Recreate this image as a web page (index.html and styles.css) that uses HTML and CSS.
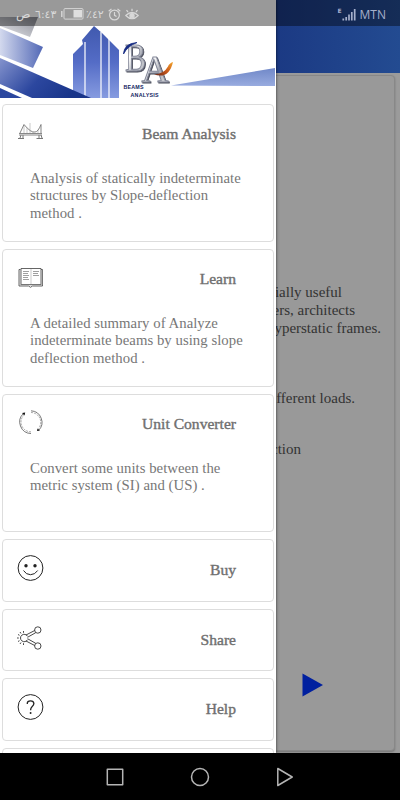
FILE: index.html
```
<!DOCTYPE html>
<html lang="en">
<head>
    <meta charset="UTF-8">
    <meta name="viewport" content="width=device-width, initial-scale=1.0">
    <title>Beams Analysis</title>
    <link rel="stylesheet" href="styles.css">
</head>
<body>
<div class="screen">
    <main class="page">
        <div class="toolbar"></div>
        <div class="page-card">
            <div class="intro">
                <p class="line useful">cially useful</p>
                <p class="line architects">ers, architects</p>
                <p class="line frames">hyperstatic frames.</p>
            </div>
            <p class="line loads">different loads.</p>
            <p class="line method">ction</p>
            <svg class="play" width="22" height="24" viewBox="0 0 22 24"><path d="M.5 .5 21 12 .5 23.5z" fill="#00209f"/></svg>
        </div>
    </main>

    <aside class="drawer">
        <svg class="hero" width="276" height="98" viewBox="0 0 276 98">
            <defs>
                <linearGradient id="stripe" x1="0" y1="0" x2="1" y2="0">
                    <stop offset="0" stop-color="#d3d9ee"/>
                    <stop offset="1" stop-color="#5268b6"/>
                </linearGradient>
                <linearGradient id="stripeTop" x1="0" y1="1" x2="1" y2="0">
                    <stop offset="0" stop-color="#e4e5ea"/>
                    <stop offset="1" stop-color="#8b8d96"/>
                </linearGradient>
                <linearGradient id="stripeDark" x1="0" y1="0" x2="1" y2=".4">
                    <stop offset="0" stop-color="#8493cd"/>
                    <stop offset=".55" stop-color="#2c479f"/>
                    <stop offset="1" stop-color="#183489"/>
                </linearGradient>
                <linearGradient id="tower" x1="0" y1="0" x2="0" y2="1">
                    <stop offset="0" stop-color="#4059ae"/>
                    <stop offset=".5" stop-color="#546cc6"/>
                    <stop offset="1" stop-color="#869be0"/>
                </linearGradient>
                <linearGradient id="wedge" x1="0" y1="0" x2="0" y2="1">
                    <stop offset="0" stop-color="#7088c8"/>
                    <stop offset="1" stop-color="#98abdf"/>
                </linearGradient>
                <linearGradient id="metal" x1="0" y1="0" x2="1" y2="1">
                    <stop offset="0" stop-color="#737783"/>
                    <stop offset=".35" stop-color="#ffffff"/>
                    <stop offset=".6" stop-color="#a9acb5"/>
                    <stop offset="1" stop-color="#eeeeee"/>
                </linearGradient>
                <linearGradient id="flame" x1="0" y1="1" x2="1" y2="0">
                    <stop offset="0" stop-color="#642419"/>
                    <stop offset=".5" stop-color="#c9591c"/>
                    <stop offset="1" stop-color="#f3a52c"/>
                </linearGradient>
            </defs>
            <rect width="276" height="98" fill="#fff"/>
            <path d="M0 17 38 17 30 37 0 26z" fill="url(#stripeTop)"/>
            <path d="M0 28 43 47 33 68 0 55z" fill="url(#stripe)"/>
            <path d="M73 54 83 44 82 40 94 26 102 33 119 50V98H73z" fill="url(#tower)"/>
            <path d="M85 42V98M101 32V98M109 39V98" stroke="#fff" stroke-width="1.200"/>
            <path d="M0 58 91 98H32L0 84z" fill="url(#stripeDark)"/>
            <path d="M0 88 22 98H0z" fill="#2b479f"/>
            <path d="M171 85.500 275 68V86z" fill="url(#wedge)"/>
            <text x="125" y="71" class="letter" fill="url(#metal)" textLength="21" lengthAdjust="spacingAndGlyphs">B</text>
            <text x="141.500" y="81.500" class="letter letter-a" fill="url(#metal)" textLength="27" lengthAdjust="spacingAndGlyphs">A</text>
            <path d="M123.500 54Q124 43.500 137 42.500Q127.500 46 123.500 54z" fill="#172c83" stroke="#172c83" stroke-width=".8"/>
            <path d="M154 74.500Q169 79.500 173 62Q169 63.500 168 66.500Q164 74 154 74.500z" fill="url(#flame)"/>
            <text x="123.500" y="89" class="tagline" textLength="20">BEAMS</text>
            <text x="130.500" y="96.500" class="tagline" textLength="28">ANALYSIS</text>
        </svg>

        <div class="menu">
            <section class="card tall">
                <div class="card-head">
                    <svg class="icon" width="28" height="28" viewBox="0 0 28 28" fill="none" stroke="#777">
                        <path d="M3 15.500H26M3 17H26" stroke="#888"/>
                        <path d="M4 15 8 6.500Q15 15 19 14Q22 14 25 6.500V15" stroke-width=".9"/>
                        <path d="M8 7V15M11 10V15M14 5V15M17 14V15M22 12V15" stroke-width=".4"/>
                        <path d="M5 17 4 20M7 17V20M23 17V20M25 17 26 20M2 20.500H8M20.500 20.500H27" stroke-width="1"/>
                    </svg>
                    <h2>Beam Analysis</h2>
                </div>
                <p>Analysis of statically indeterminate structures by Slope-deflection method .</p>
            </section>

            <section class="card tall">
                <div class="card-head">
                    <svg class="icon" width="28" height="28" viewBox="0 0 28 28" fill="none" stroke="#555">
                        <path d="M5 5.500H25V21.500H5z" stroke-width=".9"/>
                        <path d="M4.500 6.500H3V23H12.500Q14.500 25.500 16.500 23H26.500V6.500H25" stroke-width=".9"/>
                        <path d="M4 7V22H26V7" stroke="#999" stroke-width=".7"/>
                        <path d="M15 6V21" stroke="#aaa" stroke-width=".6"/>
                        <path d="M7 8.500H13M7 10.500H12M7 12.500H13M7 14.500H12M7 16.500H13M17 8.500H23M17 10.500H22M17 12.500H23" stroke="#888" stroke-width=".8"/>
                    </svg>
                    <h2>Learn</h2>
                </div>
                <p>A detailed summary of Analyze indeterminate beams by using slope deflection method .</p>
            </section>

            <section class="card tall">
                <div class="card-head">
                    <svg class="icon" width="28" height="28" viewBox="0 0 28 28" fill="none" stroke="#555">
                        <path d="M15 2.800A11.500 11.500 0 0 1 22.500 22.500" stroke-width=".8"/>
                        <path d="M15 4.500A9.800 9.800 0 0 1 22.500 20.500" stroke-width=".5" stroke-dasharray="2 1"/>
                        <path d="M15 25.500A11.500 11.500 0 0 1 7.500 5.500" stroke-width=".8"/>
                        <path d="M15 23.800A9.800 9.800 0 0 1 7.500 7.500" stroke-width=".5" stroke-dasharray="2 1"/>
                        <path d="M6 5 9.200 4.500 8.500 7.500zM21 23 21.500 20.500 24 22.500z" fill="#111" stroke="none"/>
                    </svg>
                    <h2>Unit Converter</h2>
                </div>
                <p>Convert some units between the metric system (SI) and (US) .</p>
            </section>

            <section class="card">
                <div class="card-head">
                    <svg class="icon" width="28" height="28" viewBox="0 0 28 28" fill="none" stroke="#222">
                        <circle cx="14.500" cy="14" r="12.400"/>
                        <circle cx="10" cy="11.800" r="1.700" fill="#222" stroke="none"/>
                        <circle cx="19" cy="11.800" r="1.700" fill="#222" stroke="none"/>
                        <path d="M7.500 16.500Q10 20.700 14.500 20.700T21.700 16.500"/>
                    </svg>
                    <h2>Buy</h2>
                </div>
            </section>

            <section class="card">
                <div class="card-head">
                    <svg class="icon" width="28" height="28" viewBox="0 0 28 28" fill="none" stroke="#333" stroke-width=".9">
                        <circle cx="21.800" cy="6" r="3.200"/>
                        <circle cx="21.800" cy="22" r="3.200"/>
                        <path d="M11.500 12.300A3.700 3.700 0 1 0 11.500 15.700"/>
                        <path d="M10 11 18.700 6.500M11.500 13.300 19.700 8.700M11.500 14.700 19.700 19.300M10 17 18.700 21.500"/>
                        <path d="M1 14H2.800M2 10.500 3.500 11.300M4 8 5 9.500M7.500 7V8.800M2 17.500 3.500 16.700M4 20 5 18.500M7.500 21V19.200"/>
                    </svg>
                    <h2>Share</h2>
                </div>
            </section>

            <section class="card">
                <div class="card-head">
                    <svg class="icon" width="28" height="28" viewBox="0 0 28 28" fill="none" stroke="#222">
                        <circle cx="14.500" cy="14" r="12.400"/>
                        <path d="M11.300 11V10.300Q11.300 7.800 14.500 7.800T17.900 10.600Q17.900 12 16 13.700Q14.600 15 14.600 17.300" stroke-width="1.300"/>
                        <circle cx="14.600" cy="20" r=".95" fill="#222" stroke="none"/>
                    </svg>
                    <h2>Help</h2>
                </div>
            </section>

            <section class="card"></section>
        </div>
    </aside>

    <header class="statusbar">
        <div class="status-left">
            <span class="period">ص</span>
            <span class="clock">٦:٤٣</span>
            <svg class="battery" width="23" height="12" viewBox="0 0 23 12"><path d="M.8 3V9" stroke="#d5d5d5" stroke-width="1.500"/><rect x="3" y=".6" width="19" height="10.500" rx="1" fill="none" stroke="#d5d5d5"/><rect x="12.500" y="2" width="8.500" height="7.500" fill="#dedede"/></svg>
            <span class="percent">٪٤٢</span>
            <svg class="alarm" width="13" height="13" viewBox="0 0 13 13" fill="none" stroke="#d8d8d8" stroke-width="1.200"><circle cx="6.500" cy="7" r="4.900"/><path d="M6.500 4V7.300L8.500 8.500M.7 3.300 3.500 .9M12.300 3.300 9.500 .9"/></svg>
            <svg class="eye" width="14" height="13" viewBox="0 0 14 13" fill="none" stroke="#d8d8d8" stroke-width="1.200"><path d="M.8 7.500Q7 1.500 13.200 7.500Q7 14 .8 7.500zM7 3V.8M3 4 1.500 2.200M11 4 12.500 2.200"/><circle cx="7" cy="7.700" r="2.100" fill="#d8d8d8"/></svg>
        </div>
        <div class="status-right">
            <span class="network">E</span>
            <svg class="signal" width="14" height="13" viewBox="0 0 14 13" stroke="#a5afcb" stroke-width="1.700"><path d="M1.300 10.500V12.500M4.200 9V12.500M7 6.500V12.500M9.800 4V12.500M12.700 1V12.500"/></svg>
            <span class="carrier">MTN</span>
        </div>
    </header>
</div>

<nav class="navbar">
    <svg width="18" height="18" viewBox="0 0 18 18"><rect x="1.300" y="1.300" width="15.400" height="15.400"/></svg>
    <svg width="20" height="20" viewBox="0 0 20 20"><circle cx="10" cy="10" r="8.500"/></svg>
    <svg width="18" height="20" viewBox="0 0 18 20"><path d="M1.800 1.500 16.200 10 1.800 18.500z"/></svg>
</nav>
</body>
</html>
```
FILE: styles.css
```
* {
    box-sizing: border-box;
}

body {
    margin: 0;
    width: 400px;
    height: 800px;
    overflow: hidden;
    display: flex;
    flex-direction: column;
    background-color: #000;
    font-family: "Liberation Serif", serif;
}

h2,
p {
    margin: 0;
    font-weight: normal;
}

.screen {
    position: relative;
    height: 753px;
    overflow: hidden;
    background-color: #9b9b9b;
}

/* page behind the drawer */
.page {
    height: 100%;
    display: flex;
    flex-direction: column;
}

.toolbar {
    height: 73px;
    background: linear-gradient(90deg, #1b3983 68%, #234b91 100%);
}

.page-card {
    height: 676px;
    margin: 2px 5px 0;
    border: 1px solid #888;
    border-radius: 4px;
    background-color: #999;
    box-shadow: 0 1px 2px rgba(0, 0, 0, 0.25);
    text-align: right;
}

.line {
    font-size: 15px;
    line-height: 18px;
    color: #333;
    white-space: nowrap;
}

.intro {
    padding-top: 207px;
}

.useful {
    padding-right: 52px;
}

.architects {
    padding-right: 39px;
}

.frames {
    padding-right: 13px;
}

.loads {
    margin-top: 52px;
    padding-right: 39px;
}

.method {
    margin-top: 33px;
    padding-right: 93px;
}

.play {
    display: block;
    margin: 215px 70px 0 auto;
}

/* drawer */
.drawer {
    position: absolute;
    top: 0;
    left: 0;
    width: 276px;
    height: 753px;
    overflow: hidden;
    background-color: #fff;
    box-shadow: 0 0 3px rgba(0, 0, 0, 0.7);
}

.hero {
    display: block;
}

.letter {
    font-family: "Liberation Serif", serif;
    font-size: 40px;
    stroke: #85899a;
    stroke-width: 1px;
    filter: drop-shadow(1.5px 1px 0 #4c4f5c);
}

.letter-a {
    font-size: 38px;
}

.tagline {
    font-family: "Liberation Sans", sans-serif;
    font-size: 5.3px;
    font-weight: bold;
    fill: #101c60;
}

.menu {
    display: flex;
    flex-direction: column;
    gap: 7px;
    padding: 6px 2px 0;
}

.card {
    flex: none;
    height: 62.5px;
    padding: 14px 37px 0 13px;
    border: 1px solid #ddd;
    border-radius: 4px;
    background-color: #fff;
}

.card.tall {
    height: 138px;
    padding-top: 13px;
}

.card-head {
    display: flex;
    justify-content: space-between;
}

.icon {
    flex: none;
}

.card h2 {
    padding-top: 7px;
    font-size: 15.6px;
    line-height: 18px;
    color: #707070;
    -webkit-text-stroke: 0.4px #707070;
}

.card p {
    width: 222px;
    margin: 24px 0 0 14px;
    font-size: 14.75px;
    line-height: 17.3px;
    letter-spacing: 0.04px;
    color: #777;
}

/* status bar */
.statusbar {
    position: absolute;
    top: 0;
    left: 0;
    width: 100%;
    height: 26px;
    display: flex;
    justify-content: space-between;
    align-items: center;
    padding: 2px 14px 0 16px;
    background-color: rgba(0, 0, 0, 0.4);
    font-family: "DejaVu Sans", sans-serif;
    color: #d8d8d8;
}

.status-left,
.status-right {
    display: flex;
    align-items: center;
}

.period {
    width: 19px;
    font-size: 12px;
}

.clock {
    width: 26px;
    font-size: 11px;
    direction: ltr;
    unicode-bidi: bidi-override;
}

.percent {
    width: 20px;
    margin: 0 2px;
    font-size: 11px;
    direction: ltr;
    unicode-bidi: bidi-override;
}

.eye {
    margin-left: 4px;
}

.status-right {
    color: #a5afcb;
}

.network {
    margin-top: -7px;
    font-size: 6px;
    font-weight: bold;
}

.carrier {
    margin-left: 4px;
    font-family: "Open Sans", sans-serif;
    font-size: 12px;
}

/* system buttons */
.navbar {
    height: 47px;
    display: flex;
    justify-content: center;
    align-items: center;
    gap: 66px;
}

.navbar svg {
    fill: none;
    stroke: #b5b5b5;
    stroke-width: 1.5;
    stroke-linejoin: round;
}
```
